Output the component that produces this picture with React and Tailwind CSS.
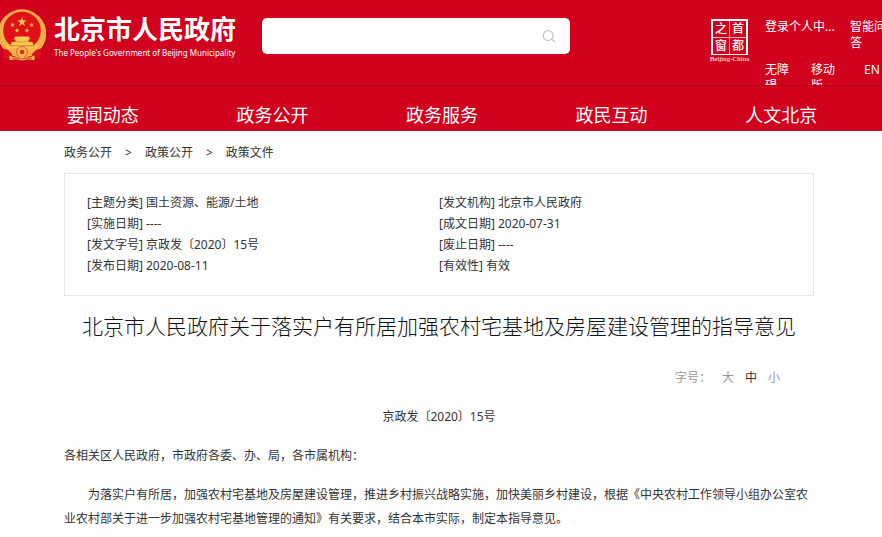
const NAV_ITEMS = ["要闻动态", "政务公开", "政务服务", "政民互动", "人文北京"];

const CRUMBS = ["政务公开", "政策公开", "政策文件"];

const META = [
  { label: "主题分类", value: "国土资源、能源/土地" },
  { label: "发文机构", value: "北京市人民政府" },
  { label: "实施日期", value: "----" },
  { label: "成文日期", value: "2020-07-31" },
  { label: "发文字号", value: "京政发〔2020〕15号" },
  { label: "废止日期", value: "----" },
  { label: "发布日期", value: "2020-08-11" },
  { label: "有效性", value: "有效" },
];

const SIZES = ["大", "中", "小"];

const App = () => {
  return (
    <div lang="zh-CN" className="min-h-screen bg-[#fefefe] font-['Noto_Sans','Noto_Sans_CJK_SC',sans-serif] text-xs text-[#333]">
      <header className="bg-[#d0021e] text-white">
        <div className="flex h-[85px] items-start overflow-hidden">
          <Brand />
          <SearchBox />
          <div className="ml-auto flex w-[172px] shrink-0 gap-4 pt-[19px]">
            <Seal />
            <QuickLinks />
          </div>
        </div>
        <nav className="border-y border-t-[#b3001c] border-b-[#a5122a] pr-4 pl-[18px]">
          <ul className="grid grid-cols-5 pt-[17px] pb-[3px] text-center text-lg leading-6">
            {NAV_ITEMS.map((item) => (
              <li key={item}>
                <a href="#">{item}</a>
              </li>
            ))}
          </ul>
        </nav>
      </header>

      <main className="pr-[68px] pl-16">
        <nav aria-label="breadcrumb" className="flex gap-[13px] pt-[10px] leading-6">
          {CRUMBS.map((crumb, i) => (
            <span key={crumb} className="flex gap-[13px]">
              {i > 0 && <span>&gt;</span>}
              <a href="#">{crumb}</a>
            </span>
          ))}
        </nav>

        <dl className="mt-2 grid grid-cols-2 border border-[#e6e6e6] px-[22px] pt-[18px] pb-[19px] leading-[21px]">
          {META.map((m) => (
            <div key={m.label} className="flex gap-[3px]">
              <dt>[{m.label}]</dt>
              <dd>{m.value}</dd>
            </div>
          ))}
        </dl>

        <h1 className="mt-[14px] text-center text-[21px] leading-8 font-light text-[#111]">
          北京市人民政府关于落实户有所居加强农村宅基地及房屋建设管理的指导意见
        </h1>

        <div className="mt-6 flex justify-end gap-[11px] pr-[34px] leading-6 text-[#999]">
          <span>字号：</span>
          {SIZES.map((size) => (
            <button key={size} type="button" className={size === "中" ? "text-[#333]" : "text-[#999]"}>
              {size}
            </button>
          ))}
        </div>

        <article className="mt-[15px] space-y-[15px] leading-6">
          <p className="text-center">京政发〔2020〕15号</p>
          <p>各相关区人民政府，市政府各委、办、局，各市属机构：</p>
          <p className="indent-6">
            为落实户有所居，加强农村宅基地及房屋建设管理，推进乡村振兴战略实施，加快美丽乡村建设，根据《中央农村工作领导小组办公室农业农村部关于进一步加强农村宅基地管理的通知》有关要求，结合本市实际，制定本指导意见。
          </p>
        </article>
      </main>
    </div>
  );
};

const Brand = () => (
  <a href="#" className="flex w-[262px] shrink-0 gap-2 pt-[9px]">
    <Emblem />
    <span className="flex flex-col pt-1 whitespace-nowrap">
      <span className="text-[26px] leading-8 font-bold">北京市人民政府</span>
      <span className="text-[8px] leading-4">The People's Government of Beijing Municipality</span>
    </span>
  </a>
);

const SearchBox = () => (
  <form role="search" className="mt-[18px] flex h-9 w-[308px] items-center rounded-[5px] bg-white pr-[14px] pl-3">
    <input type="search" aria-label="搜索" className="min-w-0 flex-1 text-sm text-[#333] outline-none" />
    <button type="submit" aria-label="搜索">
      <svg viewBox="0 0 14 14" className="size-[14px]" fill="none" stroke="#c4c4c4" strokeWidth="1.2" strokeLinecap="round">
        <circle cx="6.2" cy="6.6" r="4.9" />
        <path d="M9.8 10.2l2.8 2.4" />
      </svg>
    </button>
  </form>
);

const Seal = () => (
  <a href="#" className="flex w-[39px] shrink-0 flex-col items-center font-['Liberation_Serif','Noto_Sans_CJK_SC',serif]">
    <span className="grid h-9 w-[37px] grid-cols-2 gap-px border-2 border-white bg-[#f3b5bd] text-center text-xs leading-4 font-medium">
      <span className="bg-[#d0021e]">之</span>
      <span className="bg-[#d0021e]">首</span>
      <span className="bg-[#d0021e]">窗</span>
      <span className="bg-[#d0021e]">都</span>
    </span>
    <span className="text-[7px] leading-2 whitespace-nowrap">Beijing-China</span>
  </a>
);

const QuickLinks = () => (
  <div className="shrink-0 leading-4">
    <div className="flex gap-[14px]">
      <a href="#" className="w-[71px] whitespace-nowrap">登录个人中...</a>
      <a href="#" className="w-9">智能问答</a>
    </div>
    <div className="mt-[11px] flex">
      <a href="#" className="mr-[22px] w-6">无障碍</a>
      <a href="#" className="mr-[29px] w-6">移动版</a>
      <a href="#">EN</a>
    </div>
  </div>
);

const STAR = "M0-1L.23-.31.95-.31.36.12.59.81 0 .38-.59.81-.36.12-.95-.31-.23-.31z";

const Emblem = () => (
  <svg viewBox="0 0 46 52" className="h-[52px] w-[46px] shrink-0" aria-hidden="true">
    <circle cx="22" cy="24.500" r="24.200" fill="#f3b24a" />
    <circle cx="22" cy="24.500" r="22.200" fill="none" stroke="#e89a3c" strokeWidth="1" strokeDasharray="2 1.500" />
    <circle cx="22" cy="21.500" r="18.800" fill="#e01217" />
    <g fill="#f8c957">
      <path d={STAR} transform="translate(22 13) scale(5)" />
      <path d={STAR} transform="translate(12.500 16) rotate(15) scale(2.600)" />
      <path d={STAR} transform="translate(17 21.500) rotate(-10) scale(2.600)" />
      <path d={STAR} transform="translate(27 21.500) rotate(10) scale(2.600)" />
      <path d={STAR} transform="translate(31.500 16) rotate(-15) scale(2.600)" />
      <path d="M15 27.500h14l1.200 3h-1.700v2.500h4l1 3.500H10.500l1-3.500h4v-2.500h-1.700z" />
      <path d="M5.500 36.500h33l-2 3h-29z" />
    </g>
    <path d="M14 32.800h16M9 37h26" stroke="#d98a2c" strokeWidth=".8" />
    {/* red drapes on both sides of the gear */}
    <path d="M3 39.500l5 1.500 4 4-1 5H4z" fill="#d5151b" />
    <path d="M41 39.500L36 41l-4 4 1 5h7z" fill="#d5151b" />
    <circle cx="22" cy="43" r="5.500" fill="#f3b24a" stroke="#d8702a" strokeWidth="1" />
    <circle cx="22" cy="43" r="2.200" fill="#dc2a1c" />
    <path d="M9.500 46.500q6.500 3.500 12.500.8 6 2.700 12.500-.8v4.700q-6.500-1.500-12.500.3-6-1.800-12.500-.3z" fill="#f5bd52" />
    <path d="M12 49.500q5-.8 10 .3 5-1.100 10-.3" fill="none" stroke="#d2461f" strokeWidth=".9" />
  </svg>
);

export default App;
